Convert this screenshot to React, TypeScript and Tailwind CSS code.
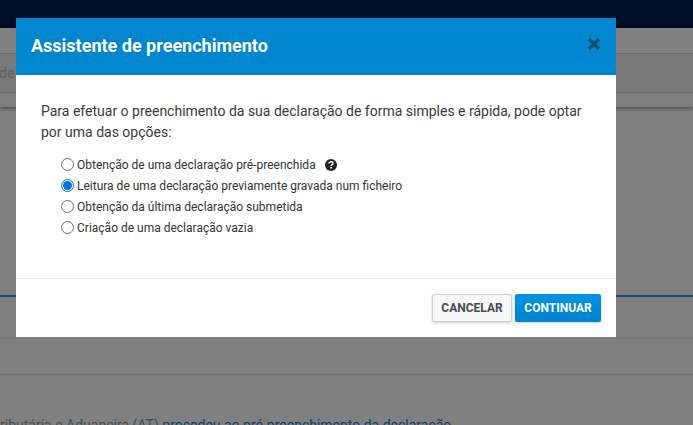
import React from "react";

const options = [
  "Obtenção de uma declaração pré-preenchida",
  "Leitura de uma declaração previamente gravada num ficheiro",
  "Obtenção da última declaração submetida",
  "Criação de uma declaração vazia",
];

function Radio({ checked }: { checked: boolean }) {
  return (
    <span
      className={`flex h-[13px] w-[13px] shrink-0 items-center justify-center rounded-full border bg-white ${
        checked ? "border-[#0075e1]" : "border-[#6f6f6f]"
      }`}
    >
      {checked && <span className="h-[9px] w-[9px] rounded-full bg-[#0075e1]" />}
    </span>
  );
}

function HelpIcon() {
  return (
    <svg width="12" height="12" viewBox="0 0 12 12" className="ml-[6px]">
      <circle cx="6" cy="6" r="6" fill="#222" />
      <path d="M4 4.6C4 3.4 4.9 2.8 6 2.8s2 .7 2 1.7c0 1.4-1.9 1.3-1.9 2.6" fill="none" stroke="#fff" strokeWidth="1.4" />
      <rect x="5.2" y="8" width="1.7" height="1.5" fill="#fff" />
    </svg>
  );
}

function Background() {
  return (
    <div className="h-[425px] w-[693px] overflow-hidden bg-[#808080] font-['Roboto',sans-serif]">
      <div className="h-[28px] bg-gradient-to-b from-[#00112e] to-[#000d26]" />
      <div className="h-[26px] border-b border-[#6b6b6b]" />
      <div className="flex h-[39px] items-center border-b border-[#6b6b6b] bg-[#7a7a7a] text-[14px] text-[#5e5e5e]">
        <span className="-ml-[1px]">de</span>
      </div>
      <div className="h-[14px] bg-[#7e7e7e] shadow-[0_2px_3px_#555]" />
      <div className="h-[188px]" />
      <div className="h-[2px] bg-[#0b4d7c]" />
      <div className="h-[42px] border-b border-[#76797c]" />
      <div className="h-[36px] border-b border-[#747474]" />
      <div className="mt-[42px] whitespace-nowrap text-[14px] leading-[16px] text-[#3f4f5c]">
        ributária e Aduaneira (AT)
        <span className="text-[#0b3f66]"> procedeu ao pré-preenchimento da declaração</span>
      </div>
    </div>
  );
}

export default function App() {
  return (
    <div className="relative h-[425px] w-[693px] overflow-hidden">
      <Background />
      <div className="absolute left-[16px] top-[18px] w-[600px] bg-white font-['Roboto',sans-serif] text-[#333]">
        <div className="flex h-[57px] items-center justify-between bg-[#0085cf] px-[15px]">
          <h1 className="-mt-[2px] text-[18px] font-bold text-white">Assistente de preenchimento</h1>
          <span className="text-[#16506f]">
            <svg width="14" height="14" viewBox="0 0 14 14" className="-mt-[6px]">
              <path d="M2 2l10 10M12 2L2 12" stroke="currentColor" strokeWidth="3.4" />
            </svg>
          </span>
        </div>
        <div className="h-[204px] border-b border-[#e5e5e5] px-[25px] pt-[26px]">
          <p className="text-[14px] leading-[21px] text-[#3a3a3a]">
            Para efetuar o preenchimento da sua declaração de forma simples e rápida, pode optar por uma das opções:
          </p>
          <div className="mt-[11px] flex flex-col pl-[20px]">
            {options.map((label, i) => (
              <label key={label} className="flex h-[21px] items-center gap-[3px] text-[12px] text-[#333]">
                <Radio checked={i === 1} />
                <span>{label}</span>
                {i === 0 && <HelpIcon />}
              </label>
            ))}
          </div>
        </div>
        <div className="flex h-[58px] items-start justify-end gap-[3px] pr-[15px] pt-[15px]">
          <button className="h-[28px] w-[80px] rounded-[2px] border border-[#d0d0d0] bg-[#f6f7f9] text-[12px] font-bold text-[#4a4a4f] shadow-[0_1px_3px_rgba(0,0,0,0.2)]">
            CANCELAR
          </button>
          <button className="h-[28px] w-[86px] rounded-[2px] bg-gradient-to-b from-[#0093e3] to-[#0082cd] text-[12px] font-bold text-white shadow-[0_1px_3px_rgba(0,0,0,0.2)]">
            CONTINUAR
          </button>
        </div>
      </div>
    </div>
  );
}
